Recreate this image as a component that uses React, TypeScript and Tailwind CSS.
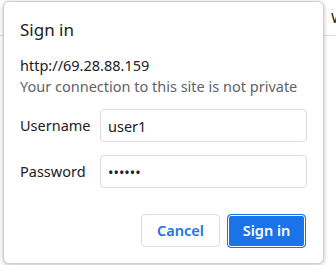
import React from 'react';

function App() {
  return (
    <div
      className="relative w-[336px] h-[265px] overflow-hidden bg-white"
      style={{ fontFamily: '"Noto Sans", "Open Sans", sans-serif' }}
    >
      {/* page behind the dialog */}
      <div className="h-[36px] border-b border-[#dadce0] flex items-center pl-[331px]">
        <span className="text-[15px] text-[#202124]">W</span>
      </div>

      {/* sign-in dialog */}
      <div className="absolute left-[3px] top-[1px] w-[321px] h-[263px] rounded-[6px] border border-[#d0d0d0] bg-white shadow-[0_1px_4px_rgba(0,0,0,0.25)] px-[16px] pt-[17px]">
        <h1 className="text-[17px] leading-[22px] text-[#202124]">Sign in</h1>
        <p className="mt-[14px] text-[14.5px] leading-[21px] text-[#202124]">http://69.28.88.159</p>
        <p className="text-[14.5px] leading-[21px] text-[#5f6368]">Your connection to this site is not private</p>

        <div className="mt-[12px] flex flex-col gap-[13px]">
          <label className="flex items-center">
            <span className="w-[82px] text-[14.5px] text-[#202124]">Username</span>
            <input
              type="text"
              defaultValue="user1"
              className="w-[207px] h-[33px] rounded-[4px] border border-[#dadce0] px-[7px] text-[14.5px] text-[#202124] outline-none"
            />
          </label>
          <label className="flex items-center">
            <span className="w-[82px] text-[14.5px] text-[#202124]">Password</span>
            <input
              type="password"
              defaultValue="secret"
              className="w-[207px] h-[33px] rounded-[4px] border border-[#dadce0] px-[7px] text-[14.5px] text-[#202124] outline-none"
            />
          </label>
        </div>

        <div className="mt-[26px] flex justify-end gap-[7px] pr-[1px]">
          <button className="w-[79px] h-[33px] rounded-[4px] border border-[#dadce0] bg-white text-[14.5px] font-semibold text-[#1a73e8]">
            Cancel
          </button>
          <button className="w-[79px] h-[34px] rounded-[4px] border border-[#1a73e8] bg-[#1a73e8] text-[14.5px] font-semibold text-white shadow-[inset_0_0_0_1px_white]">
            Sign in
          </button>
        </div>
      </div>
    </div>
  );
}

export default App;
